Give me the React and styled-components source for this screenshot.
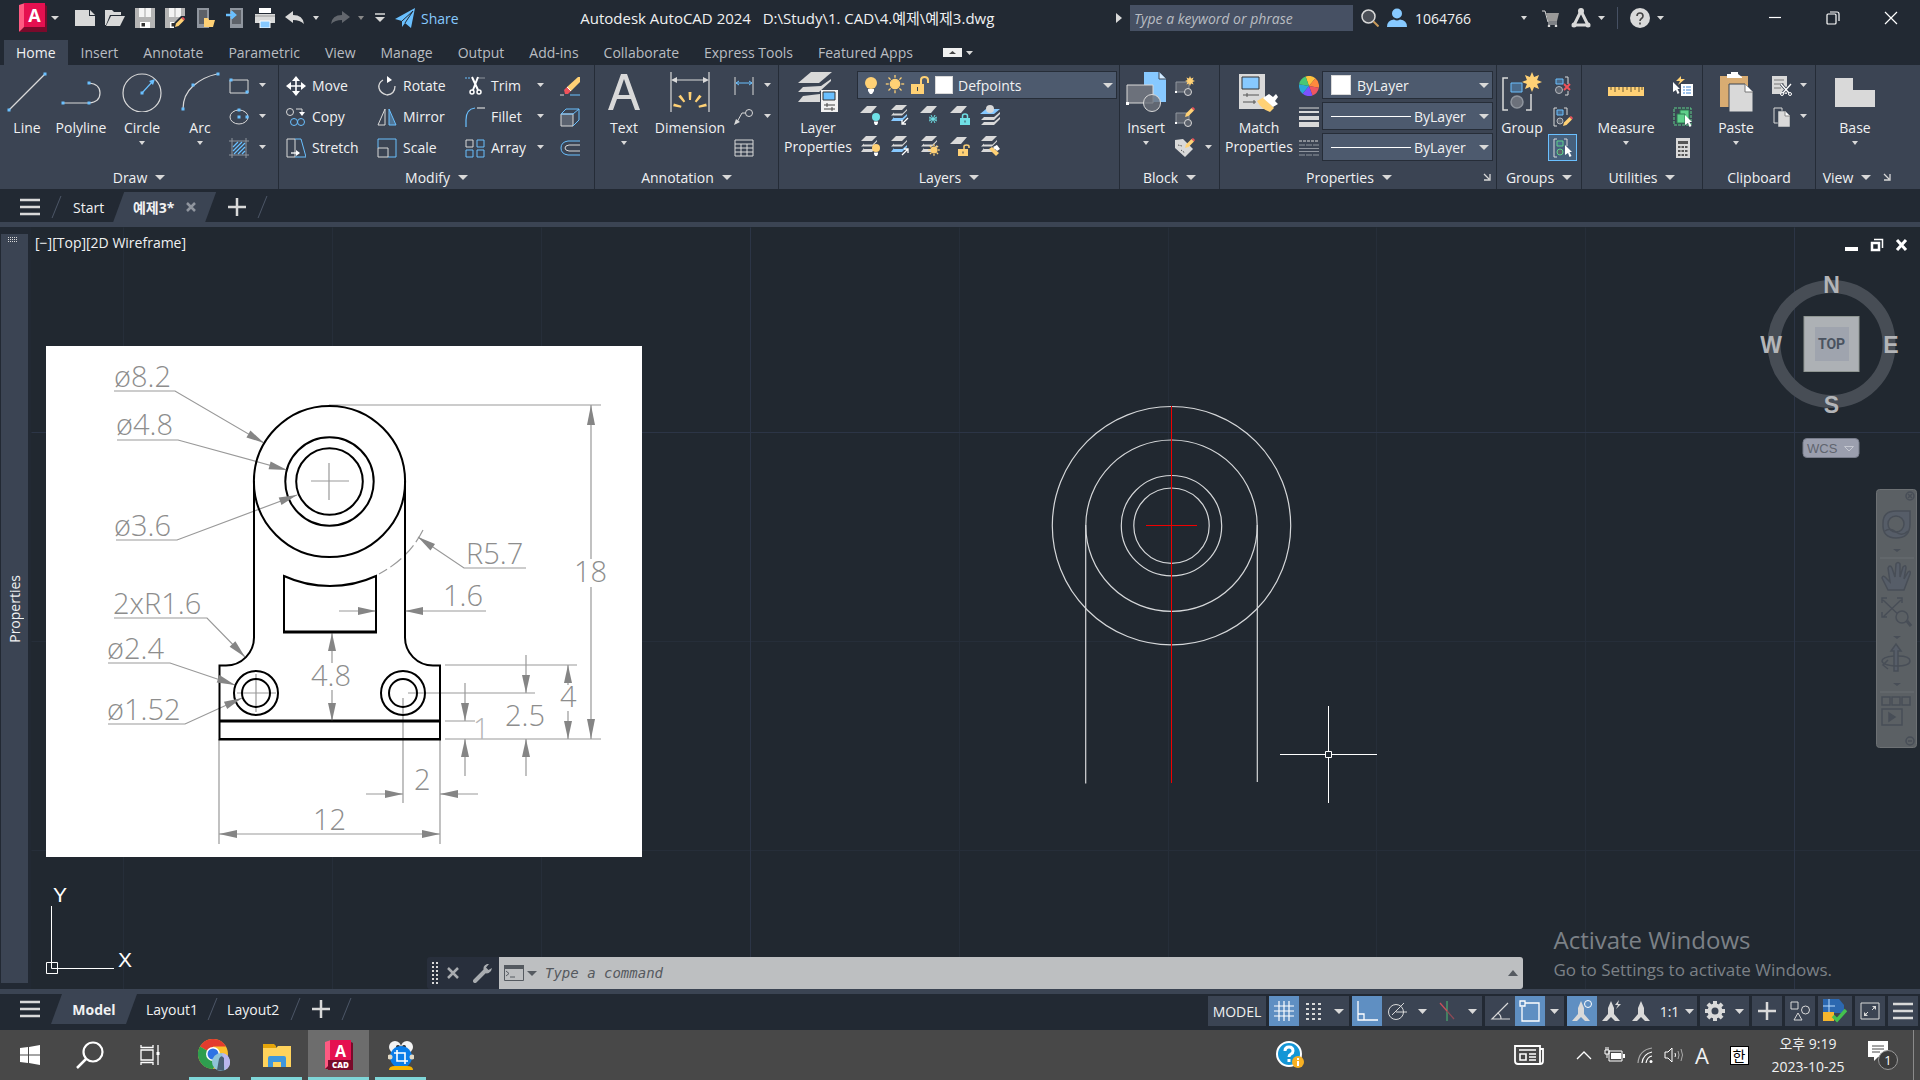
import React from "react";
import styled, { createGlobalStyle, css } from "styled-components";

const c = {
  frame: "#222933",
  panel: "#3b4453",
  canvas: "#212830",
  field: "#4d5a6e",
  text: "#f0f1f2",
  dim: "#b9bdc2",
  gray: "#d9d9d9",
  mid: "#8f959e",
  blue: "#6ac0ff",
  sky: "#87c9ff",
  yellow: "#ffd175",
  active: "#5f8fc2",
  teal: "#6fe0e6",
  red: "#f0525a",
  green: "#5fd08a",
};

const Global = createGlobalStyle`
  * { box-sizing: border-box; }
  html, body, #root { height: 100%; }
  body { margin: 0; background: ${c.frame}; overflow: hidden; }
  body, button, input, select {
    font-family: "Open Sans", "Noto Sans CJK KR", sans-serif;
    font-size: 14px;
    line-height: 19px;
    color: ${c.text};
  }
  button { background: none; border: 0; padding: 0; margin: 0; cursor: default; }
  svg { display: block; flex: none; }
`;

/* ---------- shell ---------- */

const Shell = styled.div`
  display: flex;
  flex-direction: column;
  height: 100vh;
`;

const Row = styled.div`
  display: flex;
  align-items: center;
  gap: ${(p) => p.$gap || 0}px;
`;

const IconButton = styled.button`
  display: flex;
  align-items: center;
  justify-content: center;
  flex: none;
  width: ${(p) => p.$w || 20}px;
  height: ${(p) => p.$h || 20}px;
`;

/* ---------- title bar ---------- */

const TitleBar = styled.header`
  display: flex;
  align-items: center;
  height: 36px;
  flex: none;
  padding-left: 19px;
`;

const AppButton = styled.button`
  display: flex;
  align-items: center;
  gap: 4px;
  width: 56px;
`;

const ShareLink = styled.button`
  display: flex;
  align-items: center;
  gap: 6px;
  color: ${c.sky};
`;

const Title = styled.h1`
  flex: 1;
  margin: 0;
  text-align: center;
  font-size: 15px;
  font-weight: 400;
  white-space: pre;
`;

const Search = styled.input`
  width: 223px;
  height: 26px;
  border: 0;
  padding: 0 4px;
  background: #465063;
  font-style: italic;
  &::placeholder { color: ${c.dim}; opacity: 1; }
`;

const Account = styled.button`
  width: 103px;
  text-align: left;
`;

const Rule = styled.span`
  width: 1px;
  height: 22px;
  background: #465063;
`;

const WindowButtons = styled.div`
  display: flex;
  margin-left: 82px;
`;

/* ---------- ribbon ---------- */

const Tabs = styled.nav`
  display: flex;
  align-items: center;
  gap: 1px;
  height: 29px;
  flex: none;
  padding: 4px 0 0 4px;
`;

const Tab = styled.button`
  height: 25px;
  padding: 0 12px;
  color: ${(p) => (p.$on ? c.text : c.dim)};
  background: ${(p) => (p.$on ? c.panel : "none")};
`;

const Ribbon = styled.section`
  display: grid;
  grid-template-columns: 279fr 316fr 184fr 341fr 100fr 277fr 85fr 121fr 113fr 104fr;
  height: 124px;
  flex: none;
  background: ${c.panel};
`;

const Panel = styled.div`
  display: flex;
  flex-direction: column;
  min-width: 0;
  padding-top: 5px;
  border-right: 1px solid #252c37;
  &:last-child { border-right: 0; }
`;

const PanelBody = styled.div`
  display: flex;
  height: 93px;
  padding-left: ${(p) => p.$pad || 0}px;
`;

const PanelTitle = styled.div`
  display: flex;
  align-items: center;
  height: 26px;
  padding-top: 2px;
  padding-right: ${(p) => p.$inset || 0}px;
`;

const PanelName = styled.button`
  display: flex;
  align-items: center;
  justify-content: center;
  gap: 8px;
  flex: 1;
`;

const Big = styled.button`
  display: flex;
  flex-direction: column;
  align-items: center;
  flex: none;
  width: ${(p) => p.$w}px;
  padding-top: 2px;
  svg + span { margin-top: 6px; }
  span + svg { margin-top: 4px; }
`;

const SmallCol = styled.div`
  display: grid;
  grid-template-rows: repeat(3, 31px);
  align-items: center;
  margin-left: ${(p) => p.$ml || 0}px;
`;

const ToolGrid = styled.div`
  display: grid;
  grid-template-columns: 91px 88px 79px 52px;
  grid-template-rows: repeat(3, 31px);
  align-items: center;
`;

const Tool = styled.button`
  display: flex;
  align-items: center;
  gap: 6px;
  text-align: left;
  span { flex: 1; }
`;

const Selected = styled.div`
  display: flex;
  align-items: center;
  justify-content: center;
  width: 29px;
  height: 27px;
  margin-left: -5px;
  border: 1px solid ${c.blue};
  background: #46607c;
`;

const Stack = styled.div`
  display: flex;
  flex-direction: column;
  gap: 3px;
  padding-top: 1px;
`;

const ComboStack = styled(Stack)`
  margin-left: 3px;
`;

const LayerTools = styled.div`
  display: flex;
  align-items: center;
  gap: 10px;
  height: 31px;
  padding-left: 3px;
`;

const Combo = styled.label`
  display: flex;
  align-items: center;
  width: ${(p) => p.$w}px;
  height: 28px;
  padding: 0 3px 0 ${(p) => p.$pad || 8}px;
  gap: ${(p) => p.$gap || 6}px;
  border: 1px solid #262d38;
  background: ${c.field};
`;

const Select = styled.select`
  appearance: none;
  flex: 1;
  min-width: 0;
  border: 0;
  padding: 0;
  background: none;
`;

const Swatch = styled.span`
  width: ${(p) => p.$s}px;
  height: ${(p) => p.$s}px;
  border: 1px solid ${c.gray};
  background: #fff;
`;

const Sample = styled.span`
  width: 80px;
  height: 1px;
  background: #fff;
`;

/* ---------- document tabs ---------- */

const DocTabs = styled.nav`
  display: flex;
  align-items: center;
  height: 33px;
  flex: none;
  padding: 3px 0 0 20px;
`;

const DocActive = styled.div`
  display: flex;
  align-self: stretch;
  margin: 0 12px 0 9px;
`;

const Strip = styled.div`
  height: 5px;
  flex: none;
  background: ${c.panel};
`;

const Slash = styled.span`
  width: 1px;
  height: 22px;
  background: #4d5768;
  transform: skewX(-22deg);
  margin: 0 ${(p) => p.$m || 14}px;
`;

const SlantTab = styled.button`
  display: flex;
  align-items: center;
  justify-content: center;
  gap: 12px;
  align-self: stretch;
  width: ${(p) => p.$w}px;
  font-weight: 700;
  background: ${c.panel};
  clip-path: polygon(11px 0, 100% 0, calc(100% - 11px) 100%, 0 100%);
`;

/* ---------- workspace ---------- */

const Work = styled.main`
  display: flex;
  flex: 1;
  min-height: 0;
`;

const Rail = styled.aside`
  display: flex;
  flex-direction: column;
  align-items: center;
  justify-content: space-between;
  width: 31px;
  padding: 7px 3px 6px 1px;
  flex: none;
`;

const RailInner = styled.div`
  position: relative;
  display: flex;
  align-items: center;
  justify-content: center;
  flex: 1;
  width: 27px;
  background: ${c.panel};
  svg { position: absolute; top: 3px; left: 7px; }
`;

const RailText = styled.span`
  writing-mode: vertical-rl;
  transform: rotate(180deg);
`;

const Canvas = styled.div`
  position: relative;
  flex: 1;
  overflow: hidden;
  background: ${c.canvas};
`;

const Layer = styled.svg`
  position: absolute;
  inset: 0;
`;

const Sheet = styled.div`
  position: absolute;
  left: 15px;
  top: 119px;
  background: #fff;
`;

const ViewLabel = styled.div`
  position: absolute;
  left: 4px;
  top: 6px;
`;

const ViewButtons = styled.div`
  position: absolute;
  right: 11px;
  top: 10px;
  display: flex;
  gap: 10px;
`;

const Compass = styled.div`
  position: absolute;
  right: 18px;
  top: 42px;
`;

const NavBar = styled.div`
  position: absolute;
  right: 3px;
  top: 262px;
`;

const Watermark = styled.div`
  position: absolute;
  right: 88px;
  bottom: 6px;
  color: #7c8187;
  font-size: 17px;
  line-height: 26px;
  strong {
    display: block;
    font-size: 24px;
    line-height: 34px;
    font-weight: 400;
  }
`;

const CommandBar = styled.div`
  position: absolute;
  left: 396px;
  right: 397px;
  bottom: 0;
  display: flex;
  height: 32px;
  border-radius: 3px;
  overflow: hidden;
  background: #282f3c;
`;

const CommandTools = styled.div`
  display: flex;
  align-items: center;
  gap: 9px;
  width: 72px;
  padding-left: 5px;
`;

const CommandField = styled.label`
  display: flex;
  align-items: center;
  gap: 3px;
  flex: 1;
  padding: 0 5px;
  background: #bdbfc1;
  input {
    flex: 1;
    border: 0;
    padding: 0 5px;
    background: none;
    font-family: "DejaVu Sans Mono", monospace;
    font-style: italic;
    &::placeholder { color: #55595e; opacity: 1; }
  }
`;

/* ---------- status bar ---------- */

const StatusBar = styled.footer`
  display: flex;
  align-items: flex-start;
  justify-content: space-between;
  height: 36px;
  flex: none;
  padding: 0 2px 0 20px;
`;

const LayoutTabs = styled.div`
  display: flex;
  align-items: center;
  height: 30px;
`;

const ModelTab = styled.div`
  display: flex;
  align-self: stretch;
  margin: 0 9px 0 11px;
`;

const StatusTools = styled.div`
  display: flex;
  gap: 3px;
  padding-top: 2px;
`;

const StatusGroup = styled.div`
  display: flex;
  height: 30px;
  background: ${c.panel};
`;

const StatusButton = styled.button`
  display: flex;
  align-items: center;
  justify-content: center;
  gap: 6px;
  width: ${(p) => p.$w || 30}px;
  ${(p) => p.$on && css`background: ${c.active};`}
`;

/* ---------- taskbar ---------- */

const Taskbar = styled.footer`
  display: flex;
  height: 50px;
  flex: none;
  background: #484848;
`;

const TaskButton = styled.button`
  display: flex;
  align-items: center;
  justify-content: center;
  position: relative;
  width: ${(p) => p.$w || 60}px;
  background: ${(p) => (p.$on ? "#6d6d6d" : "none")};
  &::after {
    content: "";
    position: absolute;
    bottom: 0;
    left: ${(p) => (p.$on ? 0 : 5)}px;
    right: ${(p) => (p.$on ? 0 : 5)}px;
    height: ${(p) => (p.$run ? 3 : 0)}px;
    background: #7fd6d8;
  }
`;

const Running = styled.div`
  display: flex;
  gap: 1px;
  margin-left: 4px;
`;

const Tray = styled.div`
  display: flex;
  margin-left: auto;
  padding-right: 6px;
`;

const TrayGap = styled.span`
  width: ${(p) => p.$w}px;
`;

const Clock = styled.button`
  display: flex;
  flex-direction: column;
  align-items: center;
  justify-content: center;
  gap: 4px;
  width: 94px;
  white-space: nowrap;
`;

const Glyph = styled.span`
  font-size: 22px;
  line-height: 30px;
`;

const Hangul = styled.span`
  width: 19px;
  height: 19px;
  border: 1px solid #000;
  background: #fff;
  color: #000;
  font-size: 14px;
  line-height: 17px;
`;

const TrayEdge = styled.span`
  width: 1px;
  background: #8a8a8a;
`;

/* ---------- icon helpers ---------- */

const S = ({ w = 20, h, children, ...r }) => (
  <svg width={w} height={h || w} viewBox={`0 0 ${w} ${h || w}`} fill="none" aria-hidden="true" {...r}>
    {children}
  </svg>
);

const Caret = ({ s = 8, color = c.gray }) => (
  <S w={s} h={5}>
    <path d={`M0 0H${s}L${s / 2} ${s > 8 ? 5 : 4}Z`} fill={color} />
  </S>
);

const Node = ({ x, y, s = 3 }) => <rect x={x - s / 2} y={y - s / 2} width={s} height={s} fill={c.blue} />;

const Sun = ({ x, y, r }) => (
  <g stroke={c.yellow} strokeWidth="1.3">
    <circle cx={x} cy={y} r={r * 0.58} fill={c.yellow} />
    {[0, 45, 90, 135, 180, 225, 270, 315].map((a) => (
      <path key={a} d={`M${x} ${y - r * 0.78}V${y - r * 1.15}`} transform={`rotate(${a} ${x} ${y})`} />
    ))}
  </g>
);

const Star = ({ x, y, r }) => {
  const pts = Array.from({ length: 16 }, (_, i) => {
    const q = i % 2 ? r * 0.55 : r;
    const a = (i * Math.PI) / 8;
    return `${x + q * Math.sin(a)},${y - q * Math.cos(a)}`;
  }).join(" ");
  return <polygon points={pts} fill={c.yellow} />;
};

const Pencil = ({ x, y }) => (
  <g transform={`translate(${x} ${y})`}>
    <path d="M0 10L1 6.500L6.500 1L9 3.500L3.500 9Z" fill={c.yellow} />
    <path d="M6.500 1L8 0L10 2L9 3.500Z" fill={c.red} />
  </g>
);

const Plate = ({ y, color = c.gray }) => <path d={`M7 ${y}H17L11 ${y + 7}H0Z`} fill={color} />;
const Plates = ({ mark }) => (
  <>
    <path d="M6 0H17L12 5H1Z" fill={c.gray} />
    <path d="M4 7.500L1 10.500H12L17 5.500V4L12.500 8.500H4Z" fill={c.gray} />
    <path d="M4 12L1 16H12L17 11V9L12.500 13H4Z" fill={mark ? c.sky : c.gray} />
  </>
);
const Lock = ({ x, y, color, open }) => (
  <g transform={`translate(${x} ${y})`}>
    <rect y="5" width="10" height="7" fill={color} />
    <path d={open ? "M6 5V2.500Q6 1 8.500 1T11 2.500V4" : "M2.500 5V3Q2.500 1 5 1T7.500 3V5"} stroke={color} strokeWidth="1.500" />
    <path d="M5 7.500V9.500" stroke={c.panel} />
  </g>
);
const Bulb = ({ x, y, color }) => (
  <g transform={`translate(${x} ${y})`}>
    <circle cx="4" cy="4" r="4" fill={color} />
    <path d="M2 8.500H6V10L5 12H3L2 10Z" fill="#fff" />
  </g>
);
const Cursor = ({ x, y }) => (
  <path transform={`translate(${x} ${y})`} d="M0 0L7 7H4.500L6.500 11L4.500 12L3 8L0 10Z" fill="#fff" />
);

/* ---------- title bar icons ---------- */

const Logo = ({ cad }) => (
  <S w={28} h={30} viewBox="0 0 28 30">
    <path d="M0 2L6 0V25L0 29Z" fill="#ff5a82" />
    <path d="M5 0H26V26H5Z" fill="#e51050" />
    <path d="M26 2L28 3V29H0L5 24H26Z" fill="#7a0a2b" />
    {cad && <path d="M3 20H28V30H3Z" fill="#7a0a2b" />}
    <text x="15.500" y={cad ? 17 : 19} textAnchor="middle" fill="#fff" fontSize={cad ? 16 : 18} fontWeight="700">A</text>
    {cad && <text x="15.500" y="28" textAnchor="middle" fill="#fff" fontSize="8" fontWeight="800">CAD</text>}
  </S>
);
const NewFile = () => (
  <S><path d="M0 2H14V8H20V18H0Z" fill={c.gray} /><path d="M15 2L20 7H15Z" fill={c.gray} /></S>
);
const OpenFile = () => (
  <S><path d="M0 2H7L9 4H16V7H5L1 17H0Z" fill={c.gray} /><path d="M6 8H20L15 18H1Z" fill={c.gray} /></S>
);
const Save = ({ as }) => (
  <S>
    <path d="M0 0H20V20H0Z" fill="#b4b4b4" />
    <path d="M4 0H16V9H4Z" fill="#f4f4f4" />
    <path d="M9 0H11V9H9Z" fill="#555" opacity=".25" />
    <path d="M5 14H15V20H5Z" fill="#fff" />
    <path d="M6.500 15H10V18.500H6.500Z" fill="#333" />
    {as && <path d="M9 20V15L16 8H20V20Z" fill={c.frame} />}
    {as && <Pencil x={10} y={9} />}
  </S>
);
const MobileOpen = () => (
  <S>
    <path d="M2 0H14V20H2Z" fill={c.mid} /><path d="M4 2H12V16H4Z" fill="#5d6168" />
    <path d="M9 10H13L14 12H20L18 19H9Z" fill={c.yellow} />
  </S>
);
const MobileSave = () => (
  <S>
    <path d="M5 0H18V20H5Z" fill={c.mid} /><path d="M7 2H16V16H7Z" fill="#5d6168" />
    <path d="M1 7H8M6 3.500L10 7L6 10.500" stroke={c.blue} strokeWidth="2.500" />
  </S>
);
const Print = () => (
  <S>
    <path d="M4 0H16V5H4Z" fill="#fff" /><path d="M0 6H20V15H0Z" fill={c.gray} />
    <path d="M0 8H20" stroke="#999" /><path d="M5 13H15V20H5Z" fill={c.sky} stroke="#fff" />
  </S>
);
const Undo = ({ flip }) => (
  <S opacity={flip ? 0.35 : 1}>
    <path transform={flip ? "translate(20 0) scale(-1 1)" : undefined} d="M0 9L8 3V7Q18 7 19 16Q15 12 8 12V15Z" fill={c.gray} />
  </S>
);
const Plane = () => (
  <S><path d="M0 11L20 0L16 20L10 15L7 19V13Z" fill={c.blue} /><path d="M7 13L18 3L10 15" stroke={c.frame} /></S>
);
const Lens = () => (
  <S w={18}><circle cx="7.500" cy="7.500" r="6.500" fill="#4b4f57" stroke={c.gray} strokeWidth="1.500" /><path d="M12.500 12.500L17.500 17.500" stroke="#c99a5b" strokeWidth="2" /></S>
);
const User = () => (
  <S><circle cx="10" cy="5.500" r="5" fill={c.sky} /><path d="M0 19Q0 12 7 11.500Q10 13.500 13 11.500Q20 12 20 19Z" fill={c.sky} /></S>
);
const Cart = () => (
  <S w={17}><path d="M0 1H3L6 12H15M6 14H15" stroke={c.gray} /><path d="M4 3H17L15 11H6Z" fill="#999" /><circle cx="7" cy="16" r="1.300" fill={c.gray} /><circle cx="14" cy="16" r="1.300" fill={c.gray} /></S>
);
const Tri = () => (
  <S><path d="M10 3L3 17H17Z" stroke={c.gray} strokeWidth="3" /><circle cx="10" cy="3" r="3" fill={c.gray} /><circle cx="3" cy="17" r="2.500" fill={c.gray} /><circle cx="17" cy="17" r="2.500" fill={c.gray} /></S>
);
const Help = () => (
  <S><circle cx="10" cy="10" r="10" fill={c.gray} /><path d="M7 8Q7 5 10 5T13 8Q13 9.500 11.500 10.500T10 13M10 14.500V16.500" stroke="#444" strokeWidth="1.600" /></S>
);

/* ---------- ribbon icons ---------- */

const LineIcon = () => <S w={40}><path d="M2 38L38 2" stroke={c.gray} strokeWidth="1.200" /><Node x={2} y={38} /><Node x={38} y={2} /></S>;
const PolyIcon = () => <S w={40}><path d="M2 31H28Q39 30 39 21T28 11" stroke={c.gray} strokeWidth="1.200" /><Node x={2} y={31} /><Node x={28} y={31} /><Node x={28} y={11} /></S>;
const CircleIcon = () => <S w={40}><circle cx="20" cy="21" r="19" stroke={c.gray} strokeWidth="1.200" /><path d="M20 21L31 9" stroke={c.blue} strokeWidth="1.200" /><path d="M33 7L31 13L27 9Z" fill={c.blue} /><Node x={20} y={21} /></S>;
const ArcIcon = () => <S w={40}><path d="M3 37Q3 23 13 14T37 2" stroke={c.gray} strokeWidth="1.200" /><Node x={3} y={37} /><Node x={13} y={13} /><Node x={38} y={2} /></S>;
const RectIcon = () => <S><path d="M1 4H19V17H1Z" stroke={c.gray} /><Node x={2} y={4} /><Node x={18} y={16} /></S>;
const EllipseIcon = () => <S><ellipse cx="10" cy="10" rx="9" ry="7" stroke={c.gray} /><Node x={10} y={3} /><Node x={10} y={10} /><Node x={18} y={10} /></S>;
const HatchIcon = () => <S><path d="M0 3H20M0 17H20M3 0V20M17 0V20" stroke={c.mid} /><path d="M4 9L9 4M4 13L13 4M5 16L16 5M9 16L16 9M13 16L16 13" stroke={c.blue} strokeWidth="1.300" /></S>;

const MoveIcon = () => <S><path d="M10 2V18M2 10H18" stroke="#fff" strokeWidth="1.600" /><path d="M10 0L14 5H6ZM10 20L14 15H6ZM0 10L5 6V14ZM20 10L15 6V14Z" fill="#fff" /></S>;
const RotateIcon = () => <S><path d="M6 4Q1 7 2 12T10 19Q18 18 18 10" stroke={c.gray} strokeWidth="1.300" /><path d="M10 0L15 4L10 7Z" fill="#fff" /></S>;
const TrimIcon = () => <S><path d="M0 2H6" stroke={c.blue} strokeDasharray="2 1" /><path d="M13 2H20" stroke={c.mid} /><path d="M7 1L13 14M13 1L8 14" stroke="#fff" strokeWidth="2" /><circle cx="7" cy="16" r="2" stroke="#fff" strokeWidth="1.500" /><circle cx="14" cy="16" r="2" stroke="#fff" strokeWidth="1.500" /></S>;
const EraseIcon = () => <S><path d="M0 19H4" stroke={c.gray} /><path d="M10 19H20" stroke={c.blue} /><path d="M7 11L18 1H20V6L11 15Z" fill={c.yellow} /><path d="M4 14L7 11L11 15L8 18H5Z" fill={c.red} /><path d="M7 11L11 15" stroke="#fff" /></S>;
const CopyIcon = () => <S><circle cx="4" cy="5" r="3.500" stroke={c.gray} /><path d="M10 2H16V6" stroke={c.gray} /><path d="M16 9L13 5H19Z" fill="#fff" /><circle cx="8" cy="15" r="3.500" stroke={c.blue} /><circle cx="15" cy="15" r="3.500" stroke={c.blue} /></S>;
const MirrorIcon = () => <S><path d="M8 2V18H1Z" stroke={c.gray} /><path d="M12 2V18H19Z" stroke={c.blue} fill="#4f7596" /></S>;
const FilletIcon = () => <S><path d="M1 20V13Q1 2 10 1" stroke={c.blue} strokeWidth="1.200" /><path d="M12 1H20" stroke={c.gray} strokeWidth="1.200" /></S>;
const BoxIcon = () => <S><path d="M1 7H13V19H1Z" stroke={c.gray} fill="#5a626f" /><path d="M1 7L6 2H19L13 7ZM19 2V13L13 19" stroke={c.blue} /></S>;
const StretchIcon = () => <S><path d="M1 1H9V19H1Z" stroke={c.gray} /><path d="M9 1H15L20 19H9" stroke={c.blue} /><path d="M5 15H13" stroke="#fff" strokeWidth="1.300" /><path d="M14 15L10 12V18Z" fill="#fff" /></S>;
const ScaleIcon = () => <S><path d="M1 10V1H19V19H11" stroke={c.blue} /><path d="M1 10H11V19H1Z" stroke={c.gray} /></S>;
const ArrayIcon = () => <S><path d="M1 2H8V9H1Z" stroke={c.gray} /><path d="M12 2H19V9H12ZM1 12H8V19H1ZM12 12H19V19H12Z" stroke={c.blue} /></S>;
const OffsetIcon = () => <S><path d="M20 3H8Q1 4 1 10T8 17H20" stroke={c.blue} /><path d="M20 7H9Q5 7.500 5 10T9 13H20" stroke={c.gray} /></S>;

const TextIcon = () => <S w={40}><path d="M4 38L17 2H23L36 38H31L27 27H13L9 38ZM14.500 23H25.500L20 7Z" fill={c.gray} fillRule="evenodd" /></S>;
const DimIcon = () => (
  <S w={40}>
    <path d="M1 0V40M39 0V40M3 8H37" stroke={c.gray} strokeWidth="1.200" /><path d="M1 8L7 5V11ZM39 8L33 5V11Z" fill={c.gray} />
    {[-76, -38, 0, 38, 76].map((a) => <path key={a} d="M19 28L18.500 20H21.500L21 28Z" fill={c.yellow} transform={`rotate(${a} 20 37)`} />)}
  </S>
);
const LinearIcon = () => <S><path d="M1 1V19M19 1V19" stroke={c.gray} /><path d="M2 7H18M2 7L5 5M2 7L5 9M18 7L15 5M18 7L15 9" stroke={c.blue} /></S>;
const LeaderIcon = () => <S><circle cx="15" cy="6" r="3.500" stroke={c.gray} /><path d="M11 6H8L3 15" stroke={c.gray} /><path d="M0 18L2 12L6 15Z" fill={c.gray} /></S>;
const TableIcon = () => <S><path d="M1 2H19V18H1ZM1 6H19M1 10H19M1 14H19M7 6V18M13 6V18" stroke={c.gray} /></S>;

const LayerProps = () => (
  <S w={40}>
    <path d="M13 0H34L21 11H0Z" fill={c.gray} /><path d="M5 15L0 20H21L33 9V7L23 14Z" fill={c.gray} /><path d="M5 24L0 30H22V22Z" fill={c.gray} />
    <path d="M23 18H40V40H23Z" fill="#f2f2f2" /><path d="M25 20H37V28H25Z" fill={c.blue} stroke="#333" /><path d="M26 33H37M26 37H37M29 31V35M34 35V39" stroke="#444" />
  </S>
);
const InsertIcon = () => (
  <S w={40}><path d="M18 0H33L40 7V30H18Z" fill={c.sky} /><path d="M33 0V7H40" fill="#d5ecff" stroke={c.panel} /><path d="M1 13H27V31H1Z" fill="#6c717b" stroke={c.gray} /><circle cx="26" cy="31" r="8.500" fill="#6c717b" fillOpacity=".8" stroke={c.gray} /><rect y="30" width="3" height="3" fill="#fff" /></S>
);
const BlockBase = ({ children }) => <S><path d="M1 6H14V16H1Z" fill="#5c626d" stroke={c.mid} /><circle cx="13" cy="16" r="3.500" fill="#5c626d" stroke={c.gray} /><rect y="15" width="2" height="2" fill="#fff" />{children}</S>;
const TagIcon = () => <S><path d="M0 2L8 1L18 11L10 19L0 10Z" fill={c.gray} /><path d="M3 7L7 8M6 12L10 15" stroke="#555" strokeDasharray="1.500 1" /><Pencil x={10} y={0} /></S>;
const MatchIcon = () => (
  <S w={40}><path d="M0 2H26V37H0Z" fill={c.gray} /><path d="M3 5H20V17H3Z" fill={c.sky} stroke="#333" /><path d="M4 23H20M4 30H17M8 21V25M15 28V32" stroke="#555" /><path d="M18 29L25 25L35 36L31 40Q22 37 18 29Z" fill={c.yellow} /><path d="M24 26L30 22L34 25L37 22L39 25L36 29L39 32L34 35Z" fill="#fff" /></S>
);
const Wheel = () => (
  <S>
    {["#ffc23d", "#ff8a3d", "#ef5661", "#7b52ff", "#2aa8d8", "#48c774"].map((f, i) => (
      <path key={f} d="M10 10L10 0A10 10 0 0 1 18.660 5Z" fill={f} transform={`rotate(${i * 60 - 20} 10 10)`} />
    ))}
  </S>
);
const Weights = () => <S><path d="M0 1H20" stroke={c.gray} /><path d="M0 5H20" stroke={c.gray} strokeWidth="2" /><path d="M0 11H20" stroke={c.gray} strokeWidth="4" /><path d="M0 17.500H20" stroke={c.gray} strokeWidth="5" /></S>;
const Types = () => <S><path d="M0 3H20" stroke={c.gray} strokeDasharray="3 1" /><path d="M0 7H20M0 17H20" stroke={c.mid} strokeDasharray="6 1" /><path d="M0 10.500H20M0 13.500H20" stroke={c.mid} /></S>;

const GroupIcon = () => (
  <S w={40}><path d="M6 6H1V38H6M24 38H29V22" stroke={c.gray} strokeWidth="1.500" /><path d="M9 11H20V20H9Z" fill="#4a6b8c" stroke={c.blue} /><circle cx="15" cy="30" r="6" fill="#6c717b" stroke={c.mid} strokeWidth="1.500" /><Star x={30} y={10} r={10} /></S>
);
const GroupSmall = ({ tone = c.blue, shape = "#b5b9be", bracket, children }) => (
  <S>
    {bracket ? (
      <>
        <path d="M4 1H1V19H4M11 1H14V8" stroke={c.gray} />
        <path d="M4 3H10V8H4Z" fill="#4a6b8c" stroke={tone} />
        <circle cx="7" cy="14" r="3" stroke={shape} fill="#5c626d" />
      </>
    ) : (
      <>
        <path d="M12 1H15V8M12 19H15V15" stroke={c.gray} />
        <path d="M3 3H10V8H3Z" fill="#4a6b8c" stroke={tone} />
        <circle cx="6" cy="14" r="3.500" stroke={shape} fill="#5c626d" />
      </>
    )}
    {children}
  </S>
);
const Ruler = () => <S w={40}><path d="M2 15H38V24H2Z" fill={c.yellow} />{[5, 9, 13, 17, 21, 25, 29, 33, 36].map((x, i) => <path key={x} d={`M${x} 15V${i % 2 ? 20 : 18}`} stroke="#6b5a34" />)}</S>;
const QuickSelect = () => <S><path d="M8 0L3 5H7L5 9L12 3H8Z" fill={c.yellow} /><Cursor x={0} y={6} /><path d="M8 8H20V20H8Z" fill="#fff" /><path d="M10 11H12M13 11H18M10 14H12M13 14H18M10 17H12M13 17H18" stroke="#3d86d6" /></S>;
const SelectAll = () => <S><path d="M1 1H18V18H1Z" stroke={c.green} strokeDasharray="3 1" /><path d="M7 3H16V13H7Z" fill={c.green} stroke="#2f7a52" /><path d="M4 7H12V16H4Z" fill={c.green} stroke="#2f7a52" /><Cursor x={12} y={8} /></S>;
const Calc = () => <S><path d="M3 0H17V20H3Z" fill={c.gray} /><path d="M5 3H15V6H5Z" fill="#555" />{[9, 13, 17].map((y) => <path key={y} d={`M5 ${y}H15`} stroke="#555" strokeWidth="2" strokeDasharray="2.500 1" />)}</S>;
const PasteIcon = () => <S w={40}><path d="M4 4H32V35H4Z" fill="#d9ac72" /><path d="M11 2L15 2V0H22V2L26 5V6H11Z" fill="#fff" /><path d="M13 12H29L37 20V40H13Z" fill={c.gray} stroke={c.panel} /><path d="M29 12V20H37" fill="#fff" stroke="#777" /></S>;
const CutIcon = () => <S><path d="M0 0H15V18H0Z" fill={c.gray} /><path d="M2 4H12M2 8H12M2 12H9" stroke="#777" /><path d="M9 8L18 18M19 8L10 18" stroke={c.panel} strokeWidth="3" /><path d="M9 8L17 17M19 8L11 17" stroke="#fff" strokeWidth="1.300" /><circle cx="10" cy="18" r="1.500" stroke="#fff" /><circle cx="18" cy="18" r="1.500" stroke="#fff" /></S>;
const CopyDoc = () => <S><path d="M2 1H10V16H2Z" stroke={c.gray} /><path d="M6 4H13L18 9V20H6Z" fill={c.gray} stroke={c.panel} strokeWidth=".5" /><path d="M13 4V9H18" fill="#fff" stroke="#888" /></S>;
const BaseIcon = () => <S w={40}><path d="M0 6H18V18H40V35H0Z" fill={c.gray} /></S>;
const Launch = () => <S w={8}><path d="M1 1L6 6M7 1V7H1" stroke={c.gray} strokeWidth="1.300" /></S>;

const layerTools = [
  [
    ["Off", <><Plate y={1} /><Bulb x={12} y={8} color={c.teal} /></>],
    ["Isolate", <><Plates mark /><path d="M12 19L18 13M12 15V19H16" stroke="#fff" strokeWidth="1.300" /></>],
    ["Freeze", <><Plate y={1} /><path d="M9 14H17M11 10L15 18M15 10L11 18M9 12L17 16M17 12L9 16" stroke={c.teal} /></>],
    ["Lock", <><Plate y={1} /><Lock x={10} y={8} color={c.teal} /></>],
    ["Make Current", <><path d="M6 4H20L14 9H0Z" fill={c.sky} /><circle cx="10" cy="4" r="4" fill={c.gray} /><path d="M4 12L1 15H14L20 9V7L14 12ZM4 17L1 20H14L20 14V12L14 17Z" fill={c.gray} /></>],
  ],
  [
    ["Turn All Layers On", <><Plates /><Bulb x={12} y={8} color={c.yellow} /></>],
    ["Unisolate", <><Plates mark /><path d="M12 19L18 13M14 13H18V17" stroke="#fff" strokeWidth="1.300" /></>],
    ["Thaw All", <><Plates /><Sun x={14} y={14} r={5} /></>],
    ["Unlock", <><Plate y={1} /><Lock x={8} y={8} color={c.yellow} open /></>],
    ["Match Layer", <><Plates /><path d="M9 13L12 11L19 17L16 20Z" fill={c.yellow} /><path d="M13 11L17 9L20 13L17 15Z" fill="#fff" /></>],
  ],
];

/* ---------- source sheet ---------- */

const Arrow = ({ x, y, a, l = 18 }) => (
  <path d={`M0 0L${-l} -4V4Z`} transform={`translate(${x} ${y}) rotate(${a})`} fill="#858585" />
);

const sheetLabels = [
  [68, 41, "ø8.2"], [70, 89, "ø4.8"], [68, 190, "ø3.6"], [420, 218, "R5.7"], [528, 236, "18"],
  [397, 260, "1.6"], [67, 268, "2xR1.6"], [61, 313, "ø2.4"], [61, 374, "ø1.52"], [265, 340, "4.8"],
  [459, 380, "2.5"], [514, 361, "4"], [368, 444, "2"], [267, 484, "12"],
];

const SheetDrawing = () => (
  <svg width="596" height="511" viewBox="0 0 596 511" fill="none" role="img" aria-label="Bracket drawing">
    <g stroke="#999" strokeWidth="1.200">
      <path d="M68 45H129L218 97M71 94H132L241 124M70 194H131L251 149M480 222H418L372 191M440 265H359M293 265H330M68 272H161L199 311M62 317H124L189 339M62 378H139L196 352" />
      <path d="M283 59H555M545 59V213M545 241V393M399 393H555M399 319H531M362 347H489M399 375H429" />
      <path d="M522 319V339M522 365V393M480 309V347M480 393V430M419 337V375M419 393V430" />
      <path d="M286 287V317M286 344V375M357 352V457M394 393V498M320 448H357M394 448H432M173 393V498M173 488H394" />
      <path d="M265 135H303M283 117V154M191 347H230M210 328V366" />
      <path d="M377 184Q363 212 333 228" strokeDasharray="14 4" />
    </g>
    <g stroke="#000" strokeWidth="2">
      <circle cx="283.500" cy="135.500" r="75.600" />
      <circle cx="283.500" cy="135.500" r="44.200" />
      <circle cx="283.500" cy="135.500" r="33.300" />
      <path d="M208 135V291A28 28 0 0 1 180 319.500H173.500V393.500H394V319.500H387A28 28 0 0 1 359 291V135" />
      <path d="M173 375H394" strokeWidth="3" />
      <path d="M173 393H394" strokeWidth="2" />
      <path d="M238 286V230A110 110 0 0 0 330 230V286" />
      <path d="M237 286H331" strokeWidth="3" />
      <circle cx="210" cy="347" r="22" /><circle cx="210" cy="347" r="14" />
      <circle cx="357" cy="347" r="22" /><circle cx="357" cy="347" r="14" />
    </g>
    <Arrow x={218} y={97} a={30} /><Arrow x={241} y={124} a={15} /><Arrow x={251} y={149} a={-20} />
    <Arrow x={372} y={191} a={215} /><Arrow x={359} y={265} a={180} /><Arrow x={330} y={265} a={0} />
    <Arrow x={199} y={311} a={46} /><Arrow x={189} y={339} a={20} /><Arrow x={196} y={352} a={-24} />
    <Arrow x={545} y={59} a={-90} l={20} /><Arrow x={545} y={393} a={90} l={20} />
    <Arrow x={522} y={319} a={-90} /><Arrow x={522} y={393} a={90} />
    <Arrow x={480} y={347} a={90} /><Arrow x={480} y={393} a={-90} />
    <Arrow x={419} y={375} a={90} /><Arrow x={419} y={393} a={-90} />
    <Arrow x={286} y={287} a={-90} /><Arrow x={286} y={375} a={90} />
    <Arrow x={357} y={448} a={0} /><Arrow x={394} y={448} a={180} />
    <Arrow x={173} y={488} a={180} /><Arrow x={394} y={488} a={0} />
    <g fill="#8d8d8d" fontSize="29" fontWeight="300">
      {sheetLabels.map(([x, y, t]) => <text key={t} x={x} y={y}>{t}</text>)}
      <text x="427" y="393" fill="#b5b5b5">1</text>
    </g>
  </svg>
);

/* ---------- model space ---------- */

const gridX = [123, 332, 541, 959, 1168, 1376, 1585];
const gridY = [641, 850];

const ModelSpace = () => (
  <Layer width="100%" height="100%" fill="none" aria-hidden="true">
    <g transform="translate(-30.500 -226.500)">
      <g stroke="#262e39">
        {gridX.map((x) => <path key={x} d={`M${x} 227V1400`} />)}
        {gridY.map((y) => <path key={y} d={`M31 ${y}H3000`} />)}
      </g>
      <path d="M750 227V1400M1794 227V1400M31 432H3000" stroke="#2c3546" />
    </g>
  </Layer>
);

const Entities = () => (
  <Layer width="100%" height="100%" fill="none" role="img" aria-label="Model space">
    <g transform="translate(-31 -227)" strokeWidth="1.200">
      <g stroke="#d5d7d9">
        {[119.2, 85.7, 50.2, 37.7].map((r) => <circle key={r} cx="1171.500" cy="525.700" r={r} />)}
        <path d="M1085.700 525V783.500M1257.300 525V782" />
      </g>
      <path d="M1171.500 406V783M1146 525.500H1197" stroke="#f00000" strokeWidth="1" />
      <g stroke="#fff" strokeWidth="1">
        <path d="M1328.500 706V751M1328.500 758V803M1280 754.500H1325M1332 754.500H1377M1325.500 751.500H1331.500V757.500H1325.500Z" />
        <path d="M51.500 906V968.500H114M46.500 962.500H57.500V973.500H46.500Z" />
      </g>
      <g fill="#fff" fontFamily="Liberation Sans, sans-serif" fontSize="21" fontWeight="400">
        <text x="53" y="902">Y</text>
        <text x="118" y="967">X</text>
      </g>
    </g>
  </Layer>
);

const CompassDrawing = () => (
  <svg width="142" height="194" viewBox="0 0 142 194" fill="none" role="img" aria-label="View cube">
    <g transform="translate(-1760 -269)">
      <circle cx="1831.500" cy="344" r="57.500" stroke="#474d55" strokeWidth="13" />
      <rect x="1804" y="316.500" width="55" height="55" fill="#adb1b5" stroke="#8f9692" />
      <rect x="1815" y="327" width="34" height="34" fill="#9fa4ae" />
      <text x="1831.500" y="349" textAnchor="middle" fill="#4a5360" fontFamily="Roboto, sans-serif" fontSize="14" fontWeight="700">TOP</text>
      <g fill="#b3b5b8" fontFamily="Liberation Sans, sans-serif" fontSize="23" fontWeight="700" textAnchor="middle">
        <text x="1831.500" y="293">N</text>
        <text x="1831.500" y="413">S</text>
        <text x="1771" y="353">W</text>
        <text x="1891" y="353">E</text>
      </g>
      <rect x="1803" y="438.500" width="56" height="19" rx="4" fill="#9b9fae" stroke="#777c8a" />
      <text x="1807" y="453" fill="#60656f" fontFamily="Liberation Sans, sans-serif" fontSize="13">WCS</text>
      <path d="M1844.500 446.500H1853.500L1849 451Z" stroke="#c4c7d0" />
    </g>
  </svg>
);

const NavDrawing = () => (
  <svg width="41" height="259" viewBox="0 0 41 259" fill="none" role="img" aria-label="Navigation bar">
    <rect x=".500" y=".500" width="40" height="258" rx="3" fill="#5b6064" stroke="#6d7174" />
    <g stroke="#484e57" strokeWidth="1.500">
      <circle cx="34" cy="7" r="4" /><path d="M32 5L36 9M36 5L32 9" />
      <path d="M7 34Q7 22 20 22H34V35Q34 49 20 49T7 34Z" fill="#565d68" /><circle cx="20" cy="35" r="8" fill="#5b6064" /><path d="M9 42Q14 38 20 43T32 42" />
      <path d="M12 101L6 89Q7 85 11 90L14 93L12 79Q14 75 16 79L19 88L20 75Q22 72 24 75V88L27 78Q30 75 30 79L28 90L32 83Q35 81 34 85L28 101Z" fill="#565d68" />
      <path d="M7 111L25 128M7 128L25 111M6 114V109H11M21 109H26V114M6 123V128H11" /><circle cx="26" cy="128" r="6" fill="#5b6064" /><path d="M31 132L35 137" strokeWidth="3" />
      <path d="M18 182V162H15L20 155L25 162H22V182Z" fill="#565d68" /><path d="M18 167Q6 168 6 172T20 177Q34 177 34 172T22 167M12 171L7 176L12 180" />
      <path d="M6 208H14V216H6ZM16 208H24V216H16ZM26 208H34V216H26ZM6 220H26V236H6Z" /><path d="M13 224L19 228L13 232Z" fill="#484e57" />
      <circle cx="34" cy="252" r="4" /><path d="M32 252H36" />
    </g>
    <path d="M17 60H25L21 63ZM17 147H25L21 150ZM17 194H25L21 197Z" fill="#484e57" />
    <path d="M4 69H38M4 203H38" stroke="#6b6f73" />
  </svg>
);

/* ---------- small pieces ---------- */

const Menu = () => <S><path d="M0 3H20M0 10H20M0 17H20" stroke={c.gray} strokeWidth="2.500" /></S>;
const Plus = () => <S w={18}><path d="M9 0V18M0 9H18" stroke={c.gray} strokeWidth="2.500" /></S>;

const BigTool = ({ w, icon, label, second, drop }) => (
  <Big $w={w}>
    {icon}
    <span>{label}</span>
    {second && <span>{second}</span>}
    {drop && <Caret s={6} />}
  </Big>
);

const Small = ({ label, drop, gap = 9, children }) => (
  <Row $gap={gap}>
    <IconButton aria-label={label}>{children}</IconButton>
    {drop && <IconButton $w={8} aria-label={`${label} options`}><Caret s={7} /></IconButton>}
  </Row>
);

const Group = ({ name, pad, launch, inset, plain, children }) => (
  <Panel>
    <PanelBody $pad={pad}>{children}</PanelBody>
    <PanelTitle $inset={inset}>
      <PanelName>{name}{!plain && <Caret s={10} />}</PanelName>
      {launch && <IconButton $w={18} aria-label={`${name} settings`}><Launch /></IconButton>}
    </PanelTitle>
  </Panel>
);

const TextTool = ({ icon, label, drop }) => (
  <Tool>{icon}<span>{label}</span>{drop && <Caret s={7} />}</Tool>
);

const ModelMark = ({ children }) => (
  <S w={22} h={24}><path d="M10 2L13 9V15L19 22H14L10 18L6 22H1L7 15V9Z" fill={c.gray} />{children}</S>
);

const tabs = ["Home", "Insert", "Annotate", "Parametric", "View", "Manage", "Output", "Add-ins", "Collaborate", "Express Tools", "Featured Apps"];

export default function App() {
  return (
    <Shell>
      <Global />
      <TitleBar>
        <AppButton aria-label="Application menu"><Logo /><Caret /></AppButton>
        <Row $gap={10}>
          <IconButton aria-label="New"><NewFile /></IconButton>
          <IconButton aria-label="Open"><OpenFile /></IconButton>
          <IconButton aria-label="Save"><Save /></IconButton>
          <IconButton aria-label="Save As"><Save as /></IconButton>
          <IconButton aria-label="Open from mobile"><MobileOpen /></IconButton>
          <IconButton aria-label="Save to mobile"><MobileSave /></IconButton>
          <IconButton aria-label="Plot"><Print /></IconButton>
          <Row $gap={7}><IconButton aria-label="Undo"><Undo /></IconButton><IconButton $w={8} aria-label="Undo list"><Caret s={6} /></IconButton></Row>
          <Row $gap={7}><IconButton aria-label="Redo"><Undo flip /></IconButton><IconButton $w={8} aria-label="Redo list"><Caret s={6} color="#888" /></IconButton></Row>
          <IconButton $w={10} aria-label="Customize"><S w={10}><path d="M0 1H10" stroke={c.gray} strokeWidth="1.500" /><path d="M0 4H10L5 9Z" fill={c.gray} /></S></IconButton>
          <ShareLink><Plane />Share</ShareLink>
        </Row>
        <Title>{"Autodesk AutoCAD 2024   D:\\Study\\1. CAD\\4.예제\\예제3.dwg"}</Title>
        <Row $gap={8}>
          <S w={6} h={10}><path d="M0 0L6 5L0 10Z" fill={c.gray} /></S>
          <Search aria-label="Search" placeholder="Type a keyword or phrase" />
          <IconButton $w={18} aria-label="Find"><Lens /></IconButton>
          <User />
          <Account>1064766</Account>
        </Row>
        <Row $gap={12}>
          <IconButton $w={12} aria-label="Account menu"><Caret s={6} /></IconButton>
          <IconButton $w={17} aria-label="Store"><Cart /></IconButton>
          <Row $gap={7}><IconButton aria-label="Autodesk apps"><Tri /></IconButton><Caret s={7} /></Row>
          <Rule />
          <Row $gap={7}><IconButton aria-label="Help"><Help /></IconButton><Caret s={7} /></Row>
        </Row>
        <WindowButtons>
          <IconButton $w={58} $h={34} aria-label="Minimize"><S w={14}><path d="M1 6.500H13" stroke="#fff" strokeWidth="1.200" /></S></IconButton>
          <IconButton $w={58} $h={34} aria-label="Restore"><S w={14}><path d="M1 4Q1 3 2 3H9Q10 3 10 4V12Q10 13 9 13H2Q1 13 1 12ZM4 1H11Q13 1 13 3V10" stroke="#fff" strokeWidth="1.200" /></S></IconButton>
          <IconButton $w={58} $h={34} aria-label="Close"><S w={14}><path d="M1 1L13 13M13 1L1 13" stroke="#fff" strokeWidth="1.200" /></S></IconButton>
        </WindowButtons>
      </TitleBar>

      <Tabs>
        {tabs.map((t, i) => <Tab key={t} $on={i === 0}>{t}</Tab>)}
        <IconButton $w={64} aria-label="Minimize ribbon">
          <S w={30} h={10}><path d="M0 0H19V9H0Z" fill="#f0f0f0" /><path d="M6 6H13L9.500 3Z" fill="#444" /><path d="M23 3H30L26.500 7Z" fill={c.gray} /></S>
        </IconButton>
      </Tabs>

      <Ribbon>
        <Group name="Draw" pad={2}>
          <BigTool w={50} icon={<LineIcon />} label="Line" />
          <BigTool w={58} icon={<PolyIcon />} label="Polyline" />
          <BigTool w={64} icon={<CircleIcon />} label="Circle" drop />
          <BigTool w={52} icon={<ArcIcon />} label="Arc" drop />
          <SmallCol $ml={3}>
            <Small label="Rectangle" drop><RectIcon /></Small>
            <Small label="Ellipse" drop><EllipseIcon /></Small>
            <Small label="Hatch" drop><HatchIcon /></Small>
          </SmallCol>
        </Group>

        <Group name="Modify" pad={7}>
          <ToolGrid>
            <TextTool icon={<MoveIcon />} label="Move" />
            <TextTool icon={<RotateIcon />} label="Rotate" />
            <TextTool icon={<TrimIcon />} label="Trim" drop />
            <IconButton $w={52} aria-label="Erase"><EraseIcon /></IconButton>
            <TextTool icon={<CopyIcon />} label="Copy" />
            <TextTool icon={<MirrorIcon />} label="Mirror" />
            <TextTool icon={<FilletIcon />} label="Fillet" drop />
            <IconButton $w={52} aria-label="Explode"><BoxIcon /></IconButton>
            <TextTool icon={<StretchIcon />} label="Stretch" />
            <TextTool icon={<ScaleIcon />} label="Scale" />
            <TextTool icon={<ArrayIcon />} label="Array" drop />
            <IconButton $w={52} aria-label="Offset"><OffsetIcon /></IconButton>
          </ToolGrid>
        </Group>

        <Group name="Annotation">
          <BigTool w={58} icon={<TextIcon />} label="Text" drop />
          <BigTool w={74} icon={<DimIcon />} label="Dimension" />
          <SmallCol $ml={7}>
            <Small label="Linear" drop><LinearIcon /></Small>
            <Small label="Leader" drop><LeaderIcon /></Small>
            <Small label="Table"><TableIcon /></Small>
          </SmallCol>
        </Group>

        <Group name="Layers">
          <BigTool w={78} icon={<LayerProps />} label="Layer" second="Properties" />
          <div>
            <Stack>
              <Combo $w={260} $pad={4} $gap={5}>
                <S w={18}><circle cx="9" cy="7" r="6" fill={c.yellow} /><path d="M6 13H12V15L10 18H8L6 15Z" fill="#fff" /></S>
                <S><Sun x={10} y={9} r={8} /></S>
                <S><path d="M1 9H14V19H1Z" fill={c.yellow} /><path d="M11 9V5Q11 2 14.500 2T18 5V8" stroke={c.yellow} strokeWidth="2" /><path d="M7.500 12V16" stroke={c.panel} /></S>
                <Swatch $s={18} />
                <Select aria-label="Layer" defaultValue="Defpoints"><option>Defpoints</option></Select>
                <Caret s={10} />
              </Combo>
            </Stack>
            {layerTools.map((row) => (
              <LayerTools key={row[0][0]}>
                {row.map(([name, art]) => <IconButton key={name} aria-label={name}><S>{art}</S></IconButton>)}
              </LayerTools>
            ))}
          </div>
        </Group>

        <Group name="Block">
          <BigTool w={52} icon={<InsertIcon />} label="Insert" drop />
          <SmallCol $ml={3}>
            <Small label="Create block"><BlockBase><Star x={15} y={5} r={5} /></BlockBase></Small>
            <Small label="Edit block"><BlockBase><Pencil x={10} y={0} /></BlockBase></Small>
            <Small label="Edit attribute" drop><TagIcon /></Small>
          </SmallCol>
        </Group>

        <Group name="Properties" launch>
          <BigTool w={78} icon={<MatchIcon />} label="Match" second="Properties" />
          <SmallCol $ml={1}>
            <Wheel /><Weights /><Types />
          </SmallCol>
          <ComboStack>
            <Combo $w={171}>
              <Swatch $s={20} />
              <Select aria-label="Object color" defaultValue="ByLayer"><option>ByLayer</option></Select>
              <Caret s={10} />
            </Combo>
            <Combo $w={171} $gap={3}>
              <Sample />
              <Select aria-label="Lineweight" defaultValue="ByLayer"><option>ByLayer</option></Select>
              <Caret s={10} />
            </Combo>
            <Combo $w={171} $gap={3}>
              <Sample />
              <Select aria-label="Linetype" defaultValue="ByLayer"><option>ByLayer</option></Select>
              <Caret s={10} />
            </Combo>
          </ComboStack>
        </Group>

        <Group name="Groups">
          <BigTool w={50} icon={<GroupIcon />} label="Group" />
          <SmallCol $ml={6}>
            <Small label="Ungroup"><GroupSmall><path d="M11 8L17 14M17 8L11 14" stroke={c.red} strokeWidth="2" /></GroupSmall></Small>
            <Small label="Group edit"><GroupSmall bracket><Pencil x={10} y={9} /></GroupSmall></Small>
            <Selected><Small label="Group selection"><GroupSmall bracket tone={c.green} shape={c.green}><Cursor x={12} y={7} /></GroupSmall></Small></Selected>
          </SmallCol>
        </Group>

        <Group name="Utilities" pad={14}>
          <BigTool w={60} icon={<Ruler />} label="Measure" drop />
          <SmallCol $ml={17}>
            <Small label="Quick select"><QuickSelect /></Small>
            <Small label="Select all"><SelectAll /></Small>
            <Small label="Calculator"><Calc /></Small>
          </SmallCol>
        </Group>

        <Group name="Clipboard" pad={7} plain>
          <BigTool w={52} icon={<PasteIcon />} label="Paste" drop />
          <SmallCol $ml={10}>
            <Small label="Cut" drop gap={7}><CutIcon /></Small>
            <Small label="Copy clip" drop gap={7}><CopyDoc /></Small>
          </SmallCol>
        </Group>

        <Group name="View" pad={14} launch inset={24}>
          <BigTool w={50} icon={<BaseIcon />} label="Base" drop />
        </Group>
      </Ribbon>

      <DocTabs>
        <IconButton aria-label="Documents"><Menu /></IconButton>
        <Slash $m={16} />
        <button>Start</button>
        <DocActive>
          <SlantTab $w={103}>예제3*<S w={10}><path d="M1 1L9 9M9 1L1 9" stroke={c.mid} strokeWidth="2.500" /></S></SlantTab>
        </DocActive>
        <IconButton $w={18} aria-label="New drawing"><Plus /></IconButton>
        <Slash $m={16} />
      </DocTabs>
      <Strip />

      <Work>
        <Rail>
          <RailInner>
            <S w={10} h={5}><path d="M0 .500H10M0 2.500H10M0 4.500H10" stroke={c.gray} strokeDasharray="1 1" /></S>
            <RailText>Properties</RailText>
          </RailInner>
        </Rail>
        <Canvas>
          <ModelSpace />
          <Sheet><SheetDrawing /></Sheet>
          <Entities />
          <ViewLabel>[−][Top][2D Wireframe]</ViewLabel>
          <ViewButtons>
            <IconButton $w={15} $h={15} aria-label="Minimize view"><S w={14}><path d="M0 11H13" stroke="#fff" strokeWidth="4" /></S></IconButton>
            <IconButton $w={15} $h={15} aria-label="Restore view"><S w={14}><path d="M2 5H9V12H2Z" stroke="#fff" strokeWidth="2.500" /><path d="M4 1.500H12.500V10" stroke="#fff" strokeWidth="1.500" /></S></IconButton>
            <IconButton $w={15} $h={15} aria-label="Close view"><S w={14}><path d="M2 2L11 12M11 2L2 12" stroke="#fff" strokeWidth="3" /></S></IconButton>
          </ViewButtons>
          <Compass><CompassDrawing /></Compass>
          <NavBar><NavDrawing /></NavBar>
          <Watermark><strong>Activate Windows</strong>Go to Settings to activate Windows.</Watermark>
          <CommandBar>
            <CommandTools>
              <S w={6} h={22}><path d="M1 0V22M5 0V22" stroke={c.gray} strokeWidth="2" strokeDasharray="2 2" /></S>
              <IconButton $w={12} aria-label="Close command line"><S w={12}><path d="M1 1L11 11M11 1L1 11" stroke="#a9acb0" strokeWidth="2.500" /></S></IconButton>
              <IconButton $w={30} aria-label="Command settings"><S><path d="M2 18L12 8" stroke="#a9acb0" strokeWidth="4" strokeLinecap="round" /><path d="M14 1Q9 3 11 8T18 8L19 5L15.500 7L13 4.500L16 1Z" fill="#a9acb0" /></S></IconButton>
            </CommandTools>
            <CommandField>
              <S w={20} h={16}><path d="M.500 .500H19.500V15.500H.500Z" stroke="#555a60" /><path d="M0 0H20V4H0Z" fill="#555a60" /><path d="M2 6L5 8.500L2 11M6 12H11" stroke="#555a60" /></S>
              <Caret s={10} color="#555a60" />
              <input aria-label="Command" placeholder="Type a command" />
              <S w={10} h={6}><path d="M0 6H10L5 0Z" fill="#555a60" /></S>
            </CommandField>
          </CommandBar>
        </Canvas>
      </Work>

      <Strip />
      <StatusBar>
        <LayoutTabs>
          <IconButton aria-label="Layouts"><Menu /></IconButton>
          <ModelTab><SlantTab $w={86}>Model</SlantTab></ModelTab>
          <button>Layout1</button>
          <Slash $m={14} />
          <button>Layout2</button>
          <Slash $m={16} />
          <IconButton $w={18} aria-label="Add layout"><Plus /></IconButton>
          <Slash $m={16} />
        </LayoutTabs>
        <StatusTools>
          <StatusGroup><StatusButton $w={58}>MODEL</StatusButton></StatusGroup>
          <StatusGroup>
            <StatusButton $on aria-label="Grid"><S><path d="M5 0V20M10 0V20M15 0V20M0 5H20M0 10H20M0 15H20" stroke="#fff" strokeWidth="1.200" /></S></StatusButton>
            <StatusButton aria-label="Snap"><S w={16} h={18}>{[2, 7, 12, 17].map((y) => <path key={y} d={`M0 ${y}H16`} stroke={c.gray} strokeWidth="2" strokeDasharray="3 3" />)}</S></StatusButton>
            <StatusButton $w={20} aria-label="Snap options"><Caret s={10} /></StatusButton>
          </StatusGroup>
          <StatusGroup>
            <StatusButton $on aria-label="Ortho"><S w={22} h={22}><path d="M2 1V20H22M2 14H8V20" stroke="#fff" strokeWidth="1.300" /></S></StatusButton>
            <StatusButton aria-label="Polar"><S><circle cx="9" cy="11" r="7.500" stroke={c.gray} /><path d="M9 11H20M5 14L17 2" stroke={c.gray} /></S></StatusButton>
            <StatusButton $w={20} aria-label="Polar options"><Caret s={9} /></StatusButton>
            <StatusButton aria-label="Isodraft"><S><path d="M10 0V20" stroke="#4fbf75" /><path d="M3 2L10 10" stroke="#c9505a" strokeWidth="1.300" /><path d="M10 10L17 18" stroke="#8d4a55" strokeWidth="1.300" /></S></StatusButton>
            <StatusButton $w={20} aria-label="Isodraft options"><Caret s={9} /></StatusButton>
          </StatusGroup>
          <StatusGroup>
            <StatusButton aria-label="Object snap tracking"><S><path d="M18 2L2 18H20M7 12Q11 13 11 18" stroke={c.gray} strokeWidth="1.200" /></S></StatusButton>
            <StatusButton $on aria-label="Object snap"><S w={22}><path d="M6 3H20V21H3V7" stroke="#fff" strokeWidth="1.300" /><path d="M1 1H6V6H1Z" stroke="#fff" strokeWidth="1.300" /></S></StatusButton>
            <StatusButton $w={19} aria-label="Object snap options"><Caret s={9} /></StatusButton>
          </StatusGroup>
          <StatusGroup>
            <StatusButton $on aria-label="Annotation visibility"><ModelMark><circle cx="17" cy="5" r="3.500" stroke="#fff" /></ModelMark></StatusButton>
            <StatusButton aria-label="Auto scale"><ModelMark><path d="M18 1L14 6H17L15 10L20 5H17Z" fill={c.gray} /></ModelMark></StatusButton>
            <StatusButton aria-label="Annotation scale mark"><ModelMark /></StatusButton>
            <StatusButton $w={40}>1:1<Caret s={9} /></StatusButton>
          </StatusGroup>
          <StatusGroup>
            <StatusButton aria-label="Workspace"><S><circle cx="10" cy="10" r="5.500" stroke={c.gray} strokeWidth="4" />{[0, 45, 90, 135, 180, 225, 270, 315].map((a) => <path key={a} d="M8 0H12V4H8Z" fill={c.gray} transform={`rotate(${a} 10 10)`} />)}</S></StatusButton>
            <StatusButton $w={19} aria-label="Workspace options"><Caret s={9} /></StatusButton>
          </StatusGroup>
          <StatusGroup><StatusButton aria-label="Add scale"><Plus /></StatusButton></StatusGroup>
          <StatusGroup><StatusButton aria-label="Isolate objects"><S><path d="M1 1H8V8H1Z" stroke={c.gray} /><circle cx="15.500" cy="9" r="4" stroke={c.gray} /><path d="M8 12L12 19H4Z" stroke={c.gray} /></S></StatusButton></StatusGroup>
          <StatusGroup><StatusButton $w={34} aria-label="Graphics performance"><S w={24}><path d="M0 0H16L21 6V14H0Z" fill="#2c68b0" /><path d="M0 7H12M6 0V14" stroke="#b9dcff" /><path d="M0 13H11V22H0Z" fill="#f6b62c" /><path d="M10 17L14 21L23 11" stroke="#44c04f" strokeWidth="3.500" /></S></StatusButton></StatusGroup>
          <StatusGroup><StatusButton aria-label="Clean screen"><S><path d="M1 2H19V18H1Z" stroke={c.gray} /><path d="M12 5H16V9Z M4 11V15H8Z" fill={c.gray} /><path d="M15 6L12 9M5 14L8 11" stroke={c.gray} /></S></StatusButton></StatusGroup>
          <StatusGroup><StatusButton aria-label="Customization"><Menu /></StatusButton></StatusGroup>
        </StatusTools>
      </StatusBar>

      <Taskbar>
        <TaskButton aria-label="Start menu"><S><path d="M0 3L8 2V9.500H0ZM9 2L20 0V9.500H9ZM0 10.500H8V18L0 17ZM9 10.500H20V20L9 18Z" fill="#fff" /></S></TaskButton>
        <TaskButton aria-label="Search Windows"><S w={30}><circle cx="18" cy="12" r="9.500" stroke="#fff" strokeWidth="2.200" /><path d="M11 19L2 28" stroke="#fff" strokeWidth="2.500" /></S></TaskButton>
        <TaskButton aria-label="Task view"><S w={22}><path d="M2 6H14V16H2ZM2 1V3.500H14V1M2 21V18.500H14V21M19 1V21" stroke="#fff" strokeWidth="1.300" /><path d="M17.500 8H20.500V11H17.500Z" fill="#fff" /></S></TaskButton>
        <Running>
          <TaskButton $w={61} $run aria-label="Chrome">
            <S w={33}>
              <circle cx="15" cy="15" r="15" fill="#fbc02d" /><path d="M15 15L2 7.500A15 15 0 0 1 28 7.500H15Z" fill="#e33b2e" /><path d="M2 7.500A15 15 0 0 0 15 30L21 18L15 15Z" fill="#2e9e4f" />
              <circle cx="15" cy="15" r="7" fill="#fff" /><circle cx="15" cy="15" r="5.500" fill="#2f72e4" /><circle cx="23" cy="23" r="9" fill="#8fc3d8" /><path d="M24 14A9 9 0 0 1 27 31Z" fill="#b9b6ee" /><path d="M19 31L21 20Q23 15 26 19V32Z" fill="#4a6075" />
            </S>
          </TaskButton>
          <TaskButton $w={61} $run aria-label="File Explorer"><S w={28} h={24}><path d="M0 1H11L13 3V8H0Z" fill="#e5a50a" /><path d="M0 5H13L15 3H28V24H0Z" fill="#ffd35c" /><path d="M5 24V15Q5 13 7 13H21Q23 13 23 15V24H18V19H10V24Z" fill="#3f97dc" /></S></TaskButton>
          <TaskButton $w={61} $run $on aria-label="AutoCAD"><Logo cad /></TaskButton>
          <TaskButton $w={61} $run aria-label="Capture tool"><S w={26} h={29}><circle cx="7" cy="6" r="6" fill="#f4f4f4" /><circle cx="19" cy="6" r="6" fill="#f4f4f4" /><circle cx="10" cy="6" r="2" fill="#222" /><circle cx="16" cy="6" r="2" fill="#222" /><circle cx="13" cy="16" r="11" fill="#0b7de8" /><path d="M1 29Q1 25 7 25H19Q25 25 25 29Z" fill="#f7b500" /><circle cx="2" cy="16" r="2.500" fill="#e2d9c4" /><circle cx="24" cy="16" r="2.500" fill="#e2d9c4" /><path d="M9 9V20H20M6 12H17V23" stroke="#fff" strokeWidth="1.600" /></S></TaskButton>
        </Running>
        <Tray>
          <TaskButton $w={30} aria-label="Support"><S w={28}><circle cx="13" cy="13" r="12" fill="#1496d6" stroke="#fff" strokeWidth="2" /><path d="M9 10Q9 6 13 6T17 10Q17 12 15 13T13 16M13 18V21" stroke="#fff" strokeWidth="3" /><circle cx="22" cy="21" r="6" fill="#f7b023" /><path d="M22 17V19M22 20V25" stroke="#fff" strokeWidth="2" /></S></TaskButton>
          <TrayGap $w={209} />
          <TaskButton $w={30} aria-label="News"><S w={30} h={20}><path d="M1 1H26V19H4Q1 19 1 16ZM26 4H29V16Q29 19 26 19" stroke="#fff" strokeWidth="1.800" /><path d="M5 5H22M15 9H22M15 12H22M15 15H22M6 9H12V15H6Z" stroke="#fff" strokeWidth="1.600" /></S></TaskButton>
          <TrayGap $w={25} />
          <TaskButton $w={30} aria-label="Hidden icons"><S w={16} h={10}><path d="M1 9L8 2L15 9" stroke="#fff" strokeWidth="1.300" /></S></TaskButton>
          <TaskButton $w={30} aria-label="Battery"><S w={21} h={16}><path d="M5 4H18V14H5Z" stroke="#fff" /><path d="M7 6H17V12H7ZM19 7H21V11H19Z" fill="#fff" /><path d="M1 3H5V7H1ZM2 0V3M4 0V3M3 7V11" stroke="#fff" /></S></TaskButton>
          <TaskButton $w={31} aria-label="Network"><S w={16}><path d="M1 16Q2 3 15 1" stroke="#aaa" strokeWidth="1.200" /><path d="M5 16Q6 7 15 5M9 16Q10 10 15 9" stroke="#fff" strokeWidth="1.200" /><circle cx="14" cy="14.500" r="1.500" fill="#fff" /></S></TaskButton>
          <TaskButton $w={27} aria-label="Volume"><S w={20} h={16}><path d="M1 5H4L8 1V15L4 11H1Z" stroke="#fff" /><path d="M11 6Q12 8 11 10" stroke="#fff" /><path d="M14 4Q16 8 14 12M17 2Q20 8 17 14" stroke="#aaa" /></S></TaskButton>
          <TaskButton $w={30} aria-label="Input mode"><Glyph>A</Glyph></TaskButton>
          <TaskButton $w={44} aria-label="Input language"><Hangul>한</Hangul></TaskButton>
          <Clock><span>오후 9:19</span><span>2023-10-25</span></Clock>
          <TaskButton $w={58} aria-label="Notifications">
            <S w={32}><path d="M0 2H20V18H10L6 22V18H0Z" fill="#fff" /><path d="M4 7H16M4 10H16M4 13H12" stroke="#484848" /><circle cx="20" cy="21" r="9.500" fill="#3c3c3c" stroke="#999" /><text x="20" y="26" textAnchor="middle" fill="#fff" fontSize="13">1</text></S>
          </TaskButton>
          <TrayEdge />
        </Tray>
      </Taskbar>
    </Shell>
  );
}
